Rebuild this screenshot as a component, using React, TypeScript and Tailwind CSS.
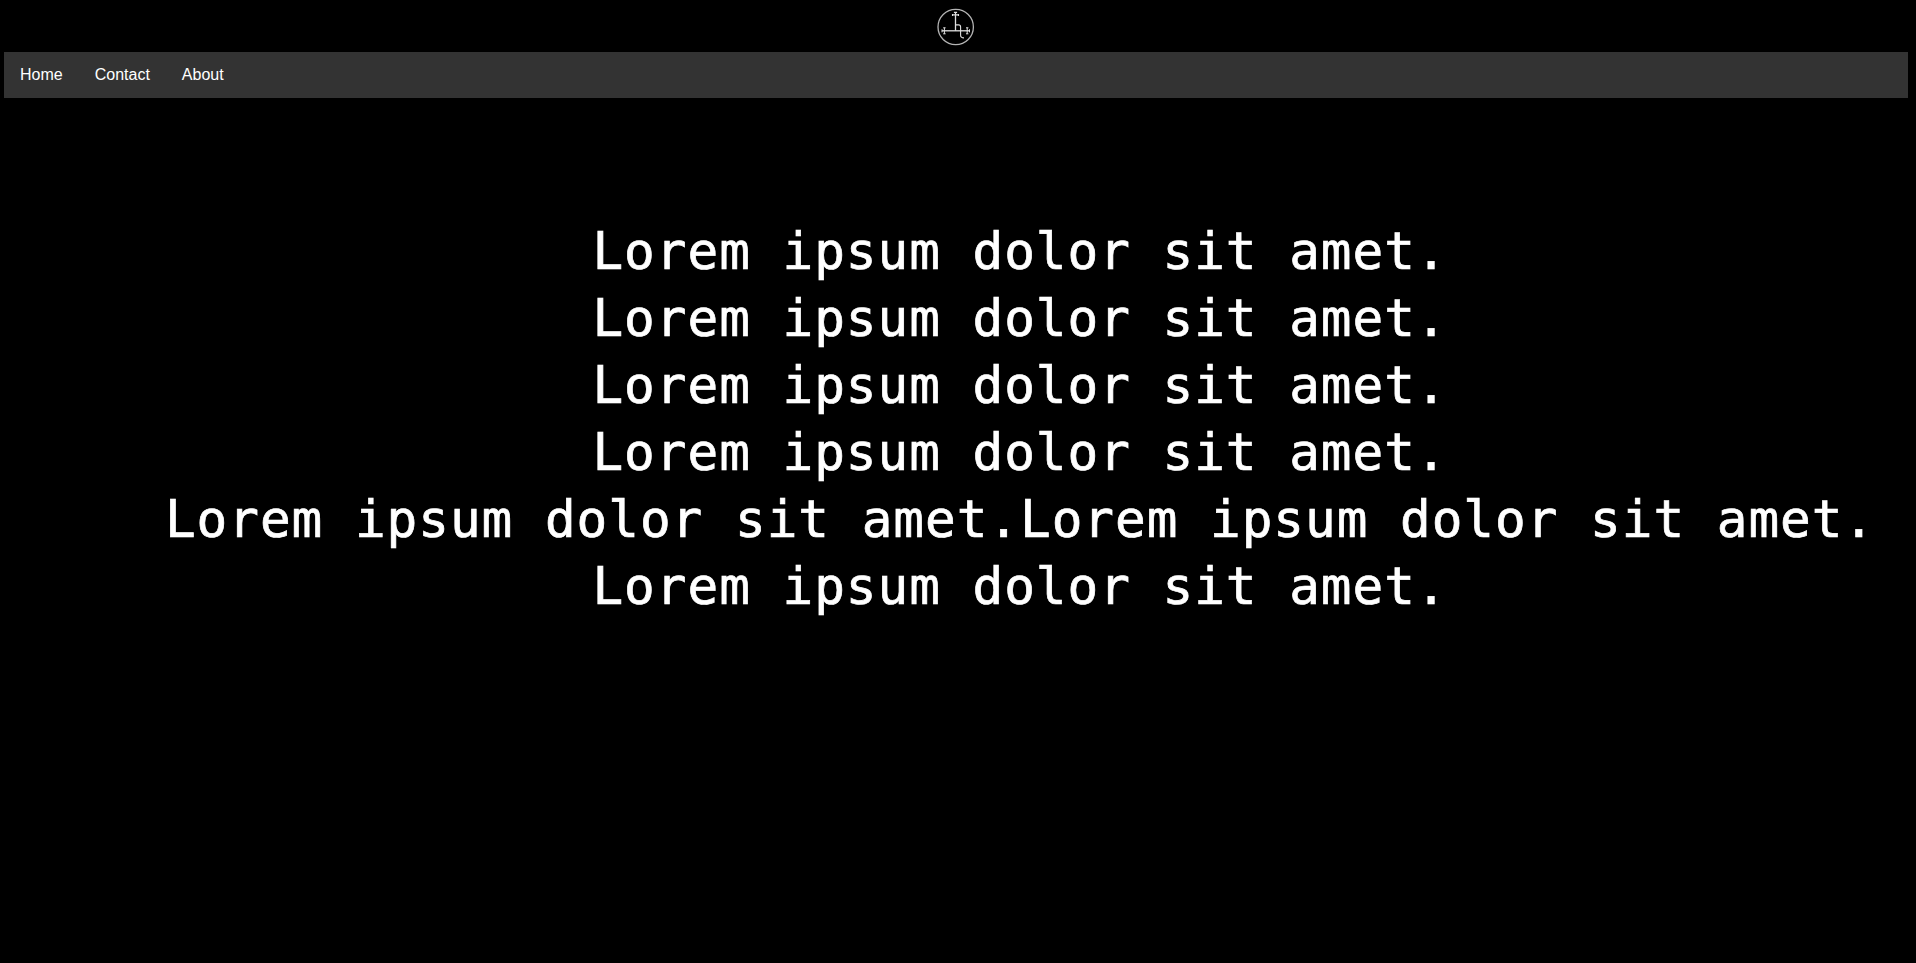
const LINE = 'Lorem ipsum dolor sit amet.';
const LINES = [LINE, LINE, LINE, LINE, LINE + LINE, LINE];
const LINKS = ['Home', 'Contact', 'About'];

function Sigil() {
  return (
    <svg width="40" height="40" viewBox="0 0 40 40" fill="none" stroke="#e0e0e0" strokeWidth="1.3">
      <circle cx="19.7" cy="20" r="17.7" strokeWidth="1.3" stroke="#b4b4b4" />
      <path d="M19.5 5.4v18.4" />
      <path d="M17.9 5.4h3.2M16.5 7.9h6M16.5 6.9v2M22.5 6.9v2" strokeWidth="1.1" />
      <path d="M6 23.8h27.5" />
      <path d="M8.4 20.8v6M31.2 20.8v6M7.2 20.8h2.4M7.2 26.8h2.4M30 20.8h2.4M30 26.8h2.4M6 22.3v3M33.5 22.3v3" strokeWidth="1" />
      <path d="M20 17.9h2.6q2 0 2 2v8.4q0 2.6 3.4 2.6" strokeWidth="1.1" />
    </svg>
  );
}

export default function App() {
  return (
    <div className="flex min-h-screen flex-col bg-black pl-1 pr-2 text-white">
      <header className="flex h-[52px] items-center justify-center pt-px">
        <Sigil />
      </header>
      <nav className="flex bg-[#333333] font-['Liberation_Sans',Arial,sans-serif] text-base leading-[18px]">
        {LINKS.map((label) => (
          <a key={label} href="#" className="px-4 py-3.5">
            {label}
          </a>
        ))}
      </nav>
      <main className="mt-[120px] whitespace-nowrap pl-[128px] text-center font-['DejaVu_Sans_Mono',monospace] text-[51px] leading-[67px] tracking-[0.965px] [-webkit-text-stroke:0.7px_white]">
        {LINES.map((line, i) => (
          <p key={i}>{line}</p>
        ))}
      </main>
    </div>
  );
}
